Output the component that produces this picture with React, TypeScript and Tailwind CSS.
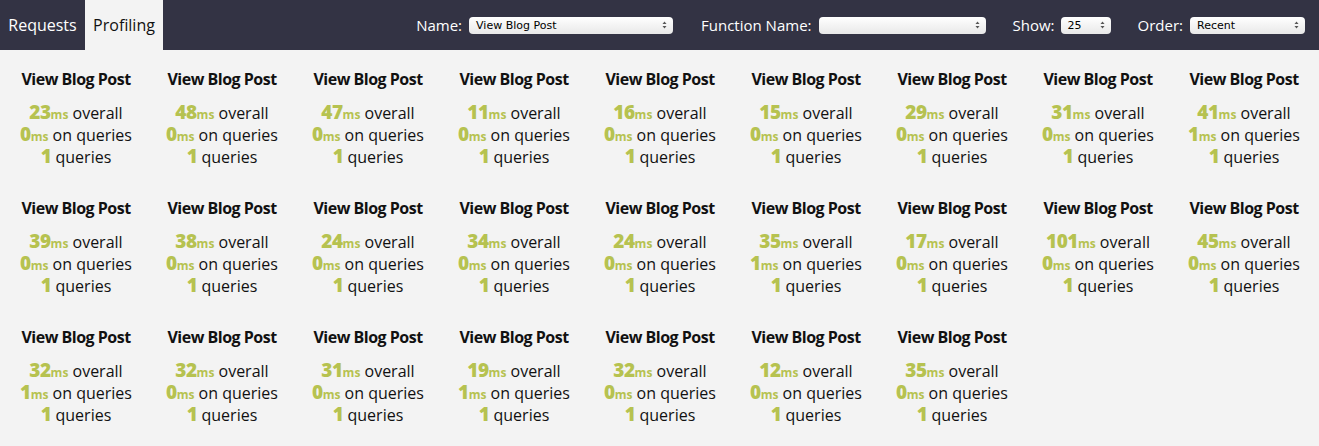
import React from "react";

const data: [number, number][] = [
  [23, 0], [48, 0], [47, 0], [11, 0], [16, 0], [15, 0], [29, 0], [31, 0], [41, 1],
  [39, 0], [38, 0], [24, 0], [34, 0], [24, 0], [35, 1], [17, 0], [101, 0], [45, 0],
  [32, 1], [32, 0], [31, 0], [19, 1], [32, 0], [12, 0], [35, 0],
];

function Arrows() {
  return (
    <svg width="5" height="8" viewBox="0 0 5 8" className="shrink-0">
      <path d="M2.5 0.5 L4.5 3 L0.5 3 Z" fill="#555" />
      <path d="M2.5 7.5 L4.5 5 L0.5 5 Z" fill="#555" />
    </svg>
  );
}

function Select({ w, value }: { w: string; value: string }) {
  return (
    <div
      className={`${w} h-[17px] rounded-[4px] bg-gradient-to-b from-white to-[#e8e8e8] flex items-center justify-between pl-[7px] pr-[6px] text-[11px] text-black`}
      style={{ fontFamily: '"DejaVu Sans", sans-serif' }}
    >
      <span className="leading-none">{value}</span>
      <Arrows />
    </div>
  );
}

function Num({ v }: { v: number }) {
  return <span className="font-extrabold text-[19px] leading-[0] text-[#b6c250] tracking-[-0.5px]">{v}</span>;
}
function Ms() {
  return <span className="font-bold text-[12px] leading-[0] text-[#b6c250]">ms</span>;
}

export default function App() {
  return (
    <div
      className="w-[1319px] h-[446px] bg-[#f3f3f3] text-[#111]"
      style={{ fontFamily: '"Open Sans", sans-serif' }}
    >
      <div className="h-[50px] bg-[#333344] flex items-stretch">
        <div className="w-[85px] flex items-center justify-center text-white text-[16px]">Requests</div>
        <div className="w-[78px] flex items-center justify-center bg-[#f3f3f3] text-[#111] text-[16px]">Profiling</div>
        <div className="flex-1" />
        <div className="flex items-center text-white text-[15px] pr-[14px]">
          <span className="mr-[7px]">Name:</span>
          <Select w="w-[204px]" value="View Blog Post" />
          <span className="ml-[28px] mr-[7px]">Function Name:</span>
          <Select w="w-[167px]" value="" />
          <span className="ml-[27px] mr-[6px]">Show:</span>
          <Select w="w-[50px]" value="25" />
          <span className="ml-[27px] mr-[7px]">Order:</span>
          <Select w="w-[115px]" value="Recent" />
        </div>
      </div>
      <div className="pl-[3px] pt-[17px] grid grid-cols-[repeat(9,146px)] gap-y-[28px]">
        {data.map(([o, q], i) => (
          <div key={i} className="flex flex-col items-center">
            <div className="font-bold text-[16px] leading-[24px] tracking-[-0.5px]">View Blog Post</div>
            <div className="mt-[11px] text-[16px] text-center">
              <div className="h-[22px] leading-[22px]"><Num v={o} /><Ms /> overall</div>
              <div className="h-[22px] leading-[22px]"><Num v={q} /><Ms /> on queries</div>
              <div className="h-[22px] leading-[22px]"><Num v={1} /> queries</div>
            </div>
          </div>
        ))}
      </div>
    </div>
  );
}
